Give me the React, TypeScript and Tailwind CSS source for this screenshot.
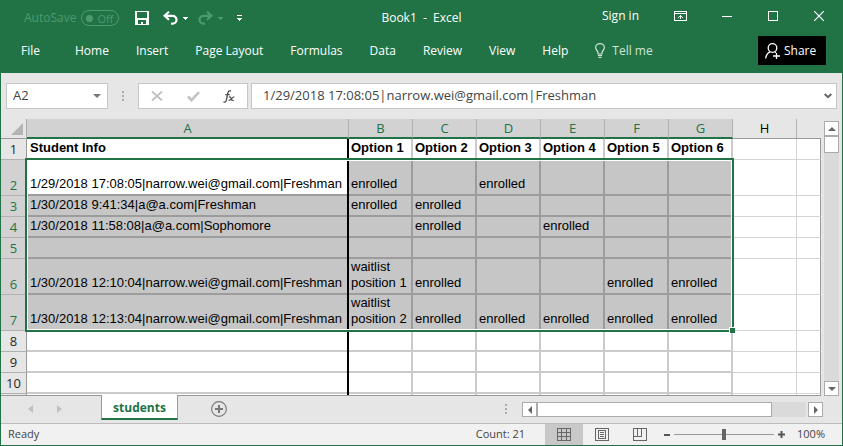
import type { ReactNode } from "react";

const UI_FONT = "font-['Open_Sans','Noto_Sans',sans-serif]";
const CELL_FONT = "font-['Liberation_Sans',Arial,sans-serif]";

const TABS = ["File", "Home", "Insert", "Page Layout", "Formulas", "Data", "Review", "View", "Help"];
const COLUMNS = ["A", "B", "C", "D", "E", "F", "G", "H", ""];
const EMPTY = ["", "", "", "", "", "", ""];

type Row = { n: number; tall?: boolean; cells: string[] };

const ROWS: Row[] = [
  { n: 1, cells: ["Student Info", "Option 1", "Option 2", "Option 3", "Option 4", "Option 5", "Option 6"] },
  { n: 2, tall: true, cells: ["1/29/2018 17:08:05|narrow.wei@gmail.com|Freshman", "enrolled", "", "enrolled", "", "", ""] },
  { n: 3, cells: ["1/30/2018 9:41:34|a@a.com|Freshman", "enrolled", "enrolled", "", "", "", ""] },
  { n: 4, cells: ["1/30/2018 11:58:08|a@a.com|Sophomore", "", "enrolled", "", "enrolled", "", ""] },
  { n: 5, cells: EMPTY },
  { n: 6, tall: true, cells: ["1/30/2018 12:10:04|narrow.wei@gmail.com|Freshman", "waitlist position 1", "enrolled", "", "", "enrolled", "enrolled"] },
  { n: 7, tall: true, cells: ["1/30/2018 12:13:04|narrow.wei@gmail.com|Freshman", "waitlist position 2", "enrolled", "enrolled", "enrolled", "enrolled", "enrolled"] },
  { n: 8, cells: EMPTY },
  { n: 9, cells: EMPTY },
  { n: 10, cells: EMPTY },
];

function IconButton({ label, className = "", children }: { label: string; className?: string; children: ReactNode }) {
  return (
    <button type="button" aria-label={label} className={`flex shrink-0 items-center justify-center ${className}`}>
      {children}
    </button>
  );
}

function Caret() {
  return (
    <svg width="5" height="3" viewBox="0 0 5 3" fill="currentColor" shapeRendering="crispEdges">
      <path d="M0 0h5v1h-5zM1 1h3v1h-3zM2 2h1v1h-1z" />
    </svg>
  );
}

function UndoIcon() {
  return (
    <svg width="15" height="14" viewBox="0 0 15 14" fill="none" stroke="currentColor" strokeWidth="2.2">
      <path d="M6 0.8 1.6 4.8 6 8.8" />
      <path d="M2 4.8h7.6a3.9 3.9 0 0 1 0 7.8H8" />
    </svg>
  );
}

function TitleBar() {
  return (
    <div className="grid h-9 grid-cols-[1fr_auto_1fr] text-xs">
      <div className="flex items-center pl-6">
        <label htmlFor="autosave" className="text-[#4d9a6f]">AutoSave</label>
        <button
          id="autosave"
          type="button"
          role="switch"
          aria-checked="false"
          className="ml-[5px] flex h-4 w-[38px] items-center justify-between rounded-full border border-[#4d9a6f] pl-1 pr-[5px] text-[11px] leading-none text-[#4d9a6f]"
        >
          <span className="h-[7px] w-[7px] rounded-full bg-[#4d9a6f]" />
          Off
        </button>
        <IconButton label="Save" className="ml-4 text-white">
          <svg width="14" height="14" viewBox="0 0 14 14" fill="currentColor" shapeRendering="crispEdges">
            <path fillRule="evenodd" d="M0 0h14v14H0zM2 1v6h10V1zM3 9v4h3v-2h2v2h3V9z" />
          </svg>
        </IconButton>
        <IconButton label="Undo" className="ml-[14px] text-white"><UndoIcon /></IconButton>
        <IconButton label="Undo history" className="ml-[5px] text-white"><Caret /></IconButton>
        <IconButton label="Redo" className="ml-[10px] -scale-x-100 text-[#4d9a6f]"><UndoIcon /></IconButton>
        <IconButton label="Redo history" className="ml-[5px] text-[#4d9a6f]"><Caret /></IconButton>
        <IconButton label="Customize Quick Access Toolbar" className="ml-[14px] text-white">
          <svg width="5" height="6" viewBox="0 0 5 6" fill="currentColor" shapeRendering="crispEdges">
            <path d="M0 0h5v1H0zM0 3h5v1H0zM1 4h3v1H1zM2 5h1v1H2z" />
          </svg>
        </IconButton>
      </div>
      <h1 className="flex items-center whitespace-pre text-white">Book1  -  Excel</h1>
      <div className="flex items-center justify-end pb-1 pr-[19px] text-white">
        <button type="button" className="mr-[35px]">Sign in</button>
        <IconButton label="Ribbon Display Options" className="mr-[35px]">
          <svg width="13" height="10" viewBox="0 0 13 10" fill="currentColor" shapeRendering="crispEdges">
            <path fillRule="evenodd" d="M0 0h13v10H0zM1 1v1h11V1zM1 3v6h11V3z" />
            <path d="M6 4h1v4H6zM5 5h3v1H5zM4 6h1v1H4zM8 6h1v1H8z" />
          </svg>
        </IconButton>
        <IconButton label="Minimize" className="mr-9 h-[10px]"><span className="h-px w-[10px] bg-white" /></IconButton>
        <IconButton label="Maximize" className="mr-9"><span className="h-[10px] w-[10px] border border-white" /></IconButton>
        <IconButton label="Close">
          <svg width="10" height="10" viewBox="0 0 10 10" stroke="currentColor" strokeWidth="1.2">
            <path d="M0 0l10 10M10 0L0 10" />
          </svg>
        </IconButton>
      </div>
    </div>
  );
}

function RibbonTabs() {
  return (
    <div className="flex h-[37px] items-start pl-[21px] pr-[17px] text-xs text-white">
      <nav className="flex h-[29px] flex-1 items-center gap-[27px]">
        {TABS.map((tab) => (
          <button key={tab} type="button" className="whitespace-nowrap first:mr-2">{tab}</button>
        ))}
        <button type="button" className="flex items-center gap-[7px] whitespace-nowrap text-[#cfe5d8]">
          <svg width="10" height="15" viewBox="0 0 10 15" fill="none" stroke="currentColor" strokeWidth="1.2">
            <path d="M3 11V9.4C3 8 .6 7.2.6 4.6a4.4 4 0 0 1 8.8 0C9.4 7.2 7 8 7 9.4V11zM3 12.5h4M3.5 14.3h3" />
          </svg>
          Tell me
        </button>
      </nav>
      <button type="button" className="flex h-[29px] w-[68px] items-center gap-[3px] bg-black pl-[7px]">
        <svg width="16" height="16" viewBox="0 0 16 16" fill="none" stroke="currentColor" strokeWidth="1.3">
          <circle cx="7.5" cy="5" r="4.3" />
          <path d="M.7 15.5c.2-3 1.800-5.300 4.300-6.600M10 8.900l1 .8M11.500 10v6M8 13h7" />
        </svg>
        Share
      </button>
    </div>
  );
}

function Grip({ className = "" }: { className?: string }) {
  return (
    <div className={`flex w-[2px] flex-col justify-center gap-[2px] ${className}`}>
      <span className="h-[2px] bg-[#ababab]" />
      <span className="h-[2px] bg-[#ababab]" />
      <span className="h-[2px] bg-[#ababab]" />
    </div>
  );
}

function FormulaBar() {
  return (
    <div className="flex h-[46px] items-start bg-[#e6e6e6] px-[5px] pt-[10px] text-[#444]">
      <div className="flex h-[26px] w-[102px] items-center border border-[#c6c6c6] bg-white px-[6px]">
        <input aria-label="Name Box" defaultValue="A2" className="min-w-0 flex-1 bg-transparent text-[13px] outline-none" />
        <IconButton label="Open name list" className="text-[#777]">
          <svg width="8" height="4" viewBox="0 0 8 4" fill="currentColor"><path d="M0 0h8L4 4z" /></svg>
        </IconButton>
      </div>
      <Grip className="mx-[14px] h-[26px]" />
      <div className="flex h-[26px] w-[110px] items-center border border-[#c6c6c6] bg-white px-3">
        <IconButton label="Cancel" className="text-[#c3c3c3]">
          <svg width="12" height="10" viewBox="0 0 12 10" stroke="currentColor" strokeWidth="2"><path d="M1 .5l10 9M11 .5l-10 9" /></svg>
        </IconButton>
        <IconButton label="Enter" className="ml-6 text-[#c3c3c3]">
          <svg width="13" height="11" viewBox="0 0 13 11" fill="none" stroke="currentColor" strokeWidth="2.6"><path d="M1 5.5l3.500 3.700L12 1.200" /></svg>
        </IconButton>
        <IconButton label="Insert Function" className="ml-auto text-[#555]">
          <svg width="12" height="13" viewBox="0 0 12 13" fill="none" stroke="currentColor" strokeWidth="1.4">
            <path d="M8 1.200C6.200.2 5.300 1.200 4.900 3L3.300 10.300C2.900 12 2 12.500.5 11.900M2.300 4.600h4.500" />
            <path d="M5.800 7c1.400-.6 1.900.2 2.300 1.700s1 2.200 2.600 1.500M11.300 6.900C9.300 6.500 8 10.700 5.600 10.300" strokeWidth="1.200" />
          </svg>
        </IconButton>
      </div>
      <div className="ml-[3px] flex h-[26px] flex-1 items-center border border-[#c6c6c6] bg-white pl-[11px] pr-1">
        <input
          aria-label="Formula Bar"
          defaultValue="1/29/2018 17:08:05|narrow.wei@gmail.com|Freshman"
          className="min-w-0 flex-1 bg-transparent text-[13px] outline-none"
        />
        <IconButton label="Expand Formula Bar" className="text-[#666]">
          <svg width="8" height="6" viewBox="0 0 8 6" fill="none" stroke="currentColor" strokeWidth="2"><path d="M.7 1L4 4.200 7.300 1" /></svg>
        </IconButton>
      </div>
    </div>
  );
}

function cellClass(row: number, col: number) {
  const selected = row >= 2 && row <= 7;
  const fill = selected && !(row === 2 && col === 0) ? "bg-[#c6c6c6]" : "bg-white";
  // The first column's thick right rule runs unbroken, so its bottom line is an inset shadow.
  if (col === 0) {
    const line = selected ? "shadow-[inset_0_-2px_0_#9c9c9c]" : "shadow-[inset_0_-2px_0_#cbcbcb]";
    return `border-r-2 border-black pb-1 pl-[3px] ${fill} ${line}`;
  }
  return `border-b-2 border-r-2 pb-[2px] pl-[2px] ${fill} ${selected ? "border-[#9c9c9c]" : "border-[#cbcbcb]"}`;
}

function columnHeaderClass(col: number) {
  if (col < 7) return "border-b-2 border-r border-b-[#217346] border-r-[#b1b1b1] bg-[#d2d2d2] text-[#217346]";
  if (col === 7) return "border-b border-r border-b-[#999] border-r-[#b1b1b1] bg-[#e6e6e6] text-black";
  return "border-b border-[#999] bg-[#e6e6e6]";
}

function Sheet() {
  return (
    <div className="relative min-w-0 flex-1 overflow-hidden border-b border-[#999]">
      <table className="w-full table-fixed border-separate border-spacing-0">
        <colgroup>
          <col className="w-[26px]" />
          <col className="w-[322px]" />
          {COLUMNS.slice(1, 8).map((c) => <col key={c} className="w-16" />)}
          <col />
        </colgroup>
        <thead>
          <tr className="h-5 text-[13px] leading-[17px]">
            <th aria-label="Select all" className="border-b border-r border-b-[#999] border-r-[#ababab] bg-[#e6e6e6] p-0 align-bottom">
              <svg width="12" height="12" viewBox="0 0 12 12" className="mb-[3px] ml-[10px]"><path d="M12 0v12H0z" fill="#b4b4b4" /></svg>
            </th>
            {COLUMNS.map((c, i) => (
              <th key={i} scope="col" className={`p-0 font-normal ${columnHeaderClass(i)}`}>{c}</th>
            ))}
          </tr>
        </thead>
        <tbody>
          {ROWS.map((row) => {
            const selected = row.n >= 2 && row.n <= 7;
            return (
              <tr key={row.n} className={row.tall ? "h-9" : "h-[21px]"}>
                <th
                  scope="row"
                  className={`border-b border-r border-b-[#b1b1b1] border-r-[#999] p-0 align-bottom text-[13px] font-normal leading-[19px] ${selected ? "bg-[#d2d2d2] text-[#217346]" : "bg-[#e6e6e6] text-[#262626]"}`}
                >
                  {row.n}
                </th>
                {row.cells.map((text, col) => (
                  <td
                    key={col}
                    className={`pr-0 pt-0 align-bottom text-[13px] leading-4 text-black ${CELL_FONT} ${row.n === 1 ? "whitespace-nowrap font-bold" : ""} ${cellClass(row.n, col)}`}
                  >
                    {text}
                  </td>
                ))}
                <td className="border-b border-r border-[#d4d4d4] bg-white p-0" />
                <td className="border-b border-r border-b-[#d4d4d4] border-r-[#999] bg-white p-0" />
              </tr>
            );
          })}
          <tr className="h-[21px]">
            <td className="border-r border-[#999] bg-[#e6e6e6] p-0" />
            {EMPTY.map((_, col) => (
              <td key={col} className={`p-0 ${cellClass(11, col)}`} />
            ))}
            <td className="border-r border-[#d4d4d4] bg-white p-0" />
            <td className="border-r border-[#999] bg-white p-0" />
          </tr>
        </tbody>
      </table>
      {/* Selection frame for A2:G7 with its fill handle */}
      <div className="pointer-events-none absolute left-6 top-[39px] h-[174px] w-[709px] border-2 border-[#217346]">
        <div className="h-full border border-white" />
        <div className="absolute -bottom-[3px] -right-[3px] h-[6px] w-[6px] border-l border-t border-white bg-[#217346]" />
      </div>
    </div>
  );
}

function ScrollButton({ label, d }: { label: string; d: string }) {
  return (
    <IconButton label={label} className="h-[15px] w-[15px] border border-[#ababab] bg-white text-[#666]">
      <svg width="8" height="8" viewBox="0 0 8 8" fill="currentColor"><path d={d} /></svg>
    </IconButton>
  );
}

function SheetTabs() {
  return (
    <div className="flex h-[27px] shrink-0 items-start bg-[#e6e6e6] pr-[19px]">
      <div className="flex h-[26px] w-[100px] items-center gap-6 pl-[27px] text-[#c0c0c0]">
        <IconButton label="Previous sheet">
          <svg width="5" height="8" viewBox="0 0 5 8" fill="currentColor"><path d="M5 0v8L0 4z" /></svg>
        </IconButton>
        <IconButton label="Next sheet">
          <svg width="5" height="8" viewBox="0 0 5 8" fill="currentColor"><path d="M0 0v8l5-4z" /></svg>
        </IconButton>
      </div>
      <button type="button" className="relative -mt-px h-[25px] w-[77px] border-x border-b-2 border-x-[#999] border-b-[#217346] bg-white pt-[3px] text-xs font-bold leading-none text-[#217346]">
        students
      </button>
      <IconButton label="New sheet" className="ml-[33px] h-[26px] text-[#777]">
        <svg width="16" height="16" viewBox="0 0 16 16" fill="none" stroke="currentColor">
          <circle cx="8" cy="8" r="7.4" strokeWidth="1.1" />
          <path d="M8 4v8M4 8h8" strokeWidth="2" />
        </svg>
      </IconButton>
      <Grip className="ml-auto h-[26px]" />
      <div className="ml-[15px] mt-[6px] flex h-[15px] w-[301px]">
        <ScrollButton label="Scroll left" d="M6 0v8L2 4z" />
        <div className="mr-[2px] flex flex-1 bg-[#dadada]">
          <div className="w-[235px] border border-[#ababab] bg-white" />
        </div>
        <ScrollButton label="Scroll right" d="M2 0v8l4-4z" />
      </div>
    </div>
  );
}

function StatusBar() {
  return (
    <footer className="flex h-[22px] shrink-0 items-center border-t border-[#bcbcbc] bg-[#f1f1f1] pl-[7px] pr-[17px] text-[11px] text-[#444]">
      <span>Ready</span>
      <span className="ml-auto">Count: 21</span>
      <div className="ml-5 flex h-full text-[#666]">
        <IconButton label="Normal view" className="w-[38px] bg-[#c8c8c8]">
          <svg width="14" height="13" viewBox="0 0 14 13" fill="none" stroke="currentColor" shapeRendering="crispEdges">
            <path d="M.5.5h13v12H.5zM.5 4.5h13M.5 8.5h13M4.5.5v12M9.5.5v12" />
          </svg>
        </IconButton>
        <IconButton label="Page layout view" className="w-[38px]">
          <svg width="14" height="13" viewBox="0 0 14 13" fill="none" stroke="currentColor" shapeRendering="crispEdges">
            <path d="M.5.5h13v12H.5zM3.5 2.5h7v8h-7zM5 4.5h4M5 6.5h4M5 8.5h4" />
          </svg>
        </IconButton>
        <IconButton label="Page break preview" className="w-[38px]">
          <svg width="14" height="13" viewBox="0 0 14 13" fill="none" stroke="currentColor" shapeRendering="crispEdges">
            <path d="M.5.5h13v12H.5zM.5 8.5h8V.5M4.5.5v8" />
          </svg>
        </IconButton>
      </div>
      <IconButton label="Zoom out" className="ml-[5px]"><span className="h-[2px] w-[6px] bg-[#555]" /></IconButton>
      <input
        type="range"
        aria-label="Zoom"
        min={10}
        max={190}
        defaultValue={100}
        className="mx-1 h-[11px] w-[100px] appearance-none bg-[linear-gradient(#999,#999)] bg-[length:100%_1px] bg-center bg-no-repeat [&::-webkit-slider-thumb]:h-[11px] [&::-webkit-slider-thumb]:w-1 [&::-webkit-slider-thumb]:appearance-none [&::-webkit-slider-thumb]:bg-[#666]"
      />
      <IconButton label="Zoom in" className="text-[#555]">
        <svg width="7" height="7" viewBox="0 0 7 7" stroke="currentColor" strokeWidth="2"><path d="M3.5 0v7M0 3.5h7" /></svg>
      </IconButton>
      <span className="ml-3">100%</span>
    </footer>
  );
}

export default function App() {
  return (
    <div className={`flex h-screen flex-col overflow-hidden bg-[#e6e6e6] ${UI_FONT}`}>
      <header className="shrink-0 bg-[#217346]">
        <TitleBar />
        <RibbonTabs />
      </header>
      <main className="flex min-h-0 flex-1 flex-col border-x border-b border-[#217346]">
        <FormulaBar />
        <div className="flex min-h-0 flex-1">
          <Sheet />
          <div className="mx-[3px] mt-[2px] flex w-[15px] flex-col bg-[#dadada]">
            <ScrollButton label="Scroll up" d="M0 6h8L4 2z" />
            <div className="h-[17px] border border-[#ababab] bg-white" />
            <div className="flex-1" />
            <ScrollButton label="Scroll down" d="M0 2h8L4 6z" />
          </div>
        </div>
        <SheetTabs />
        <StatusBar />
      </main>
    </div>
  );
}
